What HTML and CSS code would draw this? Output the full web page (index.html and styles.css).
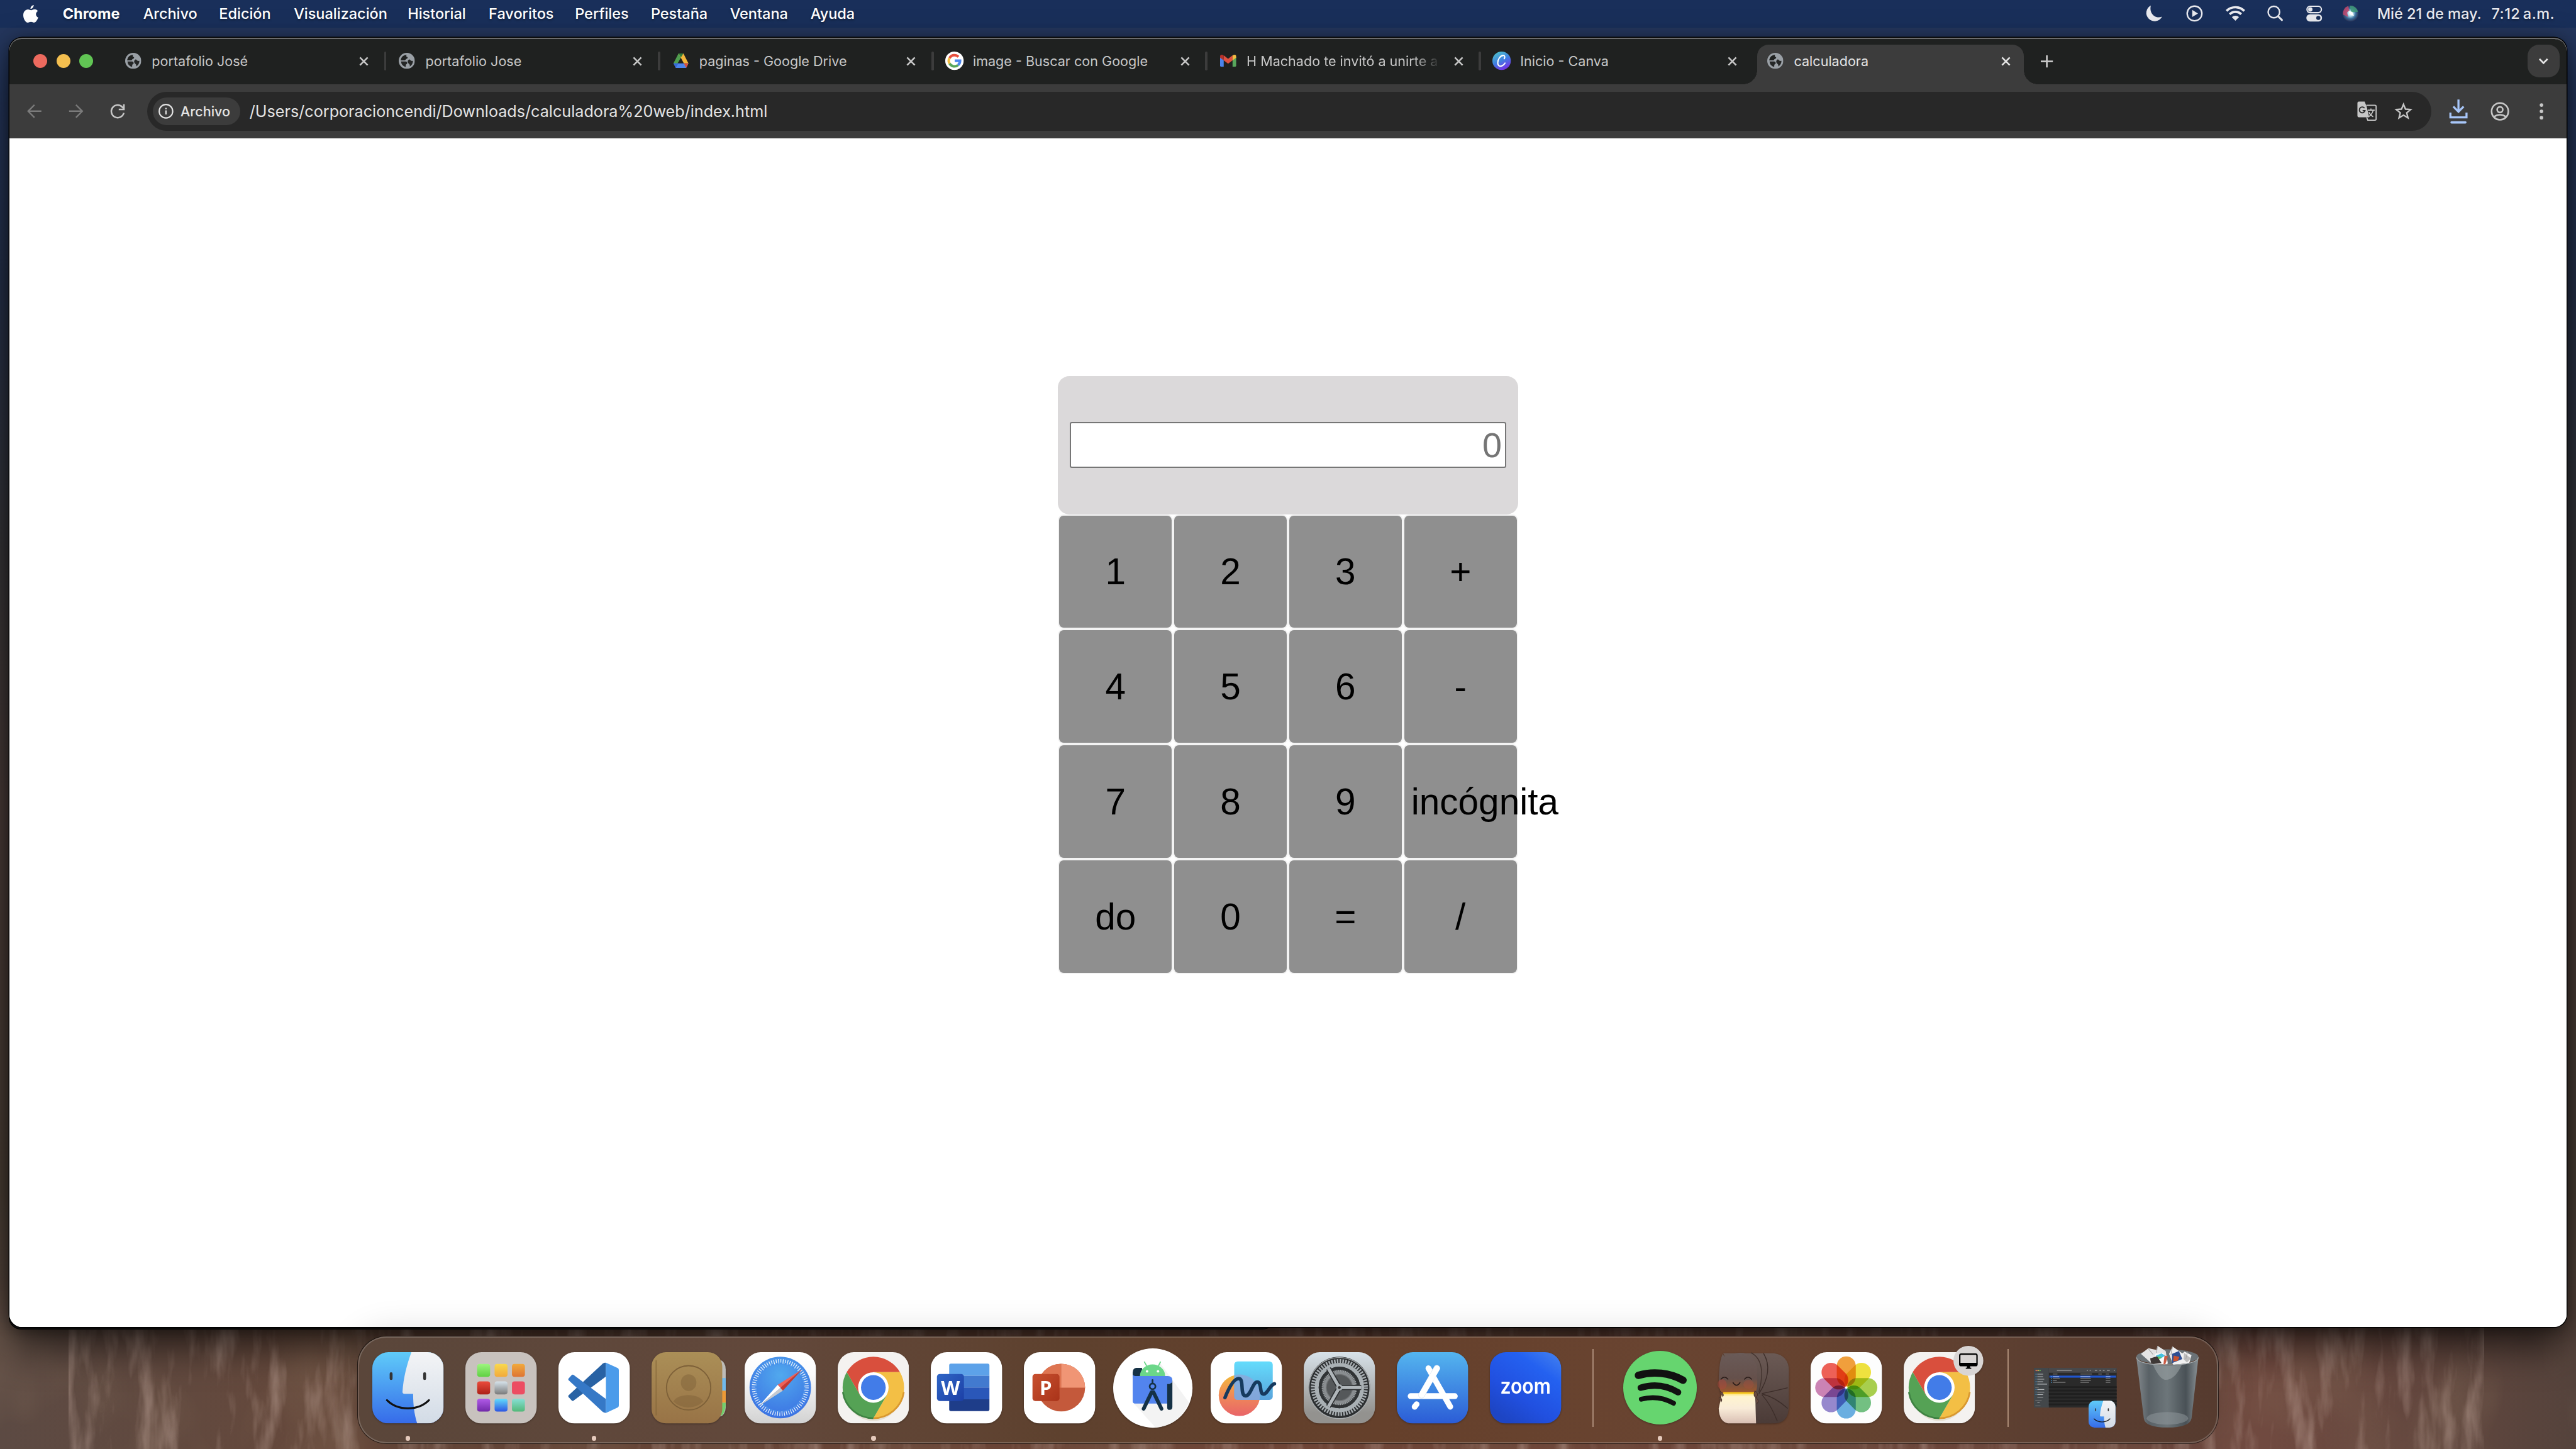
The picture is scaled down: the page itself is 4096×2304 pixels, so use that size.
FILE: index.html
```html
<!DOCTYPE html>
<html lang="es">
<head>
<meta charset="utf-8">
<title>calculadora</title>
<link rel="stylesheet" href="styles.css">
</head>
<body>
<svg class="defs" aria-hidden="true">
  <defs>
    <linearGradient id="gFinder" x1="0" y1="0" x2="0" y2="1"><stop offset="0" stop-color="#5fcbf9"/><stop offset="1" stop-color="#366be9"/></linearGradient>
    <linearGradient id="gFace" x1="0" y1="0" x2="0" y2="1"><stop offset="0" stop-color="#f3f4f6"/><stop offset="1" stop-color="#d2dbe6"/></linearGradient>
    <clipPath id="cIcon"><rect width="124" height="124" rx="28"/></clipPath>
    <radialGradient id="gSiri"><stop offset="0" stop-color="#fff"/><stop offset=".3" stop-color="#b9e4f2"/><stop offset=".65" stop-color="#3c6f9c"/><stop offset="1" stop-color="#2b3558"/></radialGradient>
  </defs>
  <symbol id="globe" viewBox="0 0 28 28">
    <circle cx="14" cy="14" r="14" fill="#9aa0a6"/>
    <path d="M14 3.200c-1.500 1.600-1.200 3.500.5 4 2 .8 1 3-.8 3.200-1.800.3-1.400 2.500-3 2.800H3.300A10.900 10.900 0 0 1 14 3.200z" fill="#1f2120"/>
    <path d="M4 15h8c2 0 3 1.600 2.800 3.400-.2 1.500-2.300 1.200-2.500 2.800l-.2 3.500A11 11 0 0 1 4 15zM18 11.500c3 0 2 3.500 6.800 2.500-.1 4-2 7.800-5.600 9.800.6-3-.4-3.800-2-5.200-1.500-1.400-2-3.500-1.200-5.200z" fill="#1f2120" opacity=".95"/>
  </symbol>
  <symbol id="x" viewBox="0 0 16 16"><path d="M1.500 1.500l13 13m0-13l-13 13" stroke="currentColor" stroke-width="2.800" fill="none"/></symbol>
  <symbol id="finder" viewBox="0 0 124 124">
    <g clip-path="url(#cIcon)">
      <rect width="124" height="124" fill="url(#gFinder)"/>
      <path d="M68 0C60 22 54 45 52.500 69q0 3.500 3.500 3.500h15C71 92 73 108 78 124h46V0z" fill="url(#gFace)"/>
    </g>
    <path d="M32.700 37.500v8.500M91 37.500v8.500" stroke="#333" stroke-width="5" stroke-linecap="round"/>
    <path d="M25.500 83.500c19 19 54 19 73 0" stroke="#111" stroke-width="3.500" fill="none" stroke-linecap="round"/>
  </symbol>
  <symbol id="chrome" viewBox="0 0 124 124">
    <rect width="124" height="124" rx="28" fill="#f4f2f0"/>
    <g transform="translate(62 61.500)">
      <ellipse cx="0" cy="6" rx="50" ry="52" fill="#b9a877" opacity=".25"/>
      <path d="M-46.300-26.750A53.500 53.500 0 0 1 46.300-26.750H0L-23.200 13.400z" fill="#d94f3d"/>
      <path d="M46.300-26.750A53.500 53.500 0 0 1 0 53.500L23.200 13.400 0-26.750z" fill="#f3bf45"/>
      <path d="M0 53.500A53.500 53.500 0 0 1-46.300-26.750L-23.200 13.400 0 20l23.200-6.600z" fill="#55a255"/>
      <path d="M0 53.500A53.500 53.500 0 0 0 53 8" stroke="#d9982f" stroke-width="3" fill="none"/>
      <path d="M0 53.500A53.500 53.500 0 0 1-53 8" stroke="#3f8343" stroke-width="3" fill="none"/>
      <circle r="26.500" fill="#fff"/><circle r="21.500" fill="#427ce8"/>
    </g>
  </symbol>
</svg>

<div class="desktop">
  <svg class="wallpaper" preserveAspectRatio="none" viewBox="0 0 4480 300" aria-hidden="true">
    <defs>
      <filter id="grain" x="0" y="0" width="100%" height="100%">
        <feTurbulence type="fractalNoise" baseFrequency=".03 .006" numOctaves="4" seed="11"/>
        <feColorMatrix values="0 0 0 0 .6  0 0 0 0 .44  0 0 0 0 .38  2.400 0 0 0 -1.150"/>
      </filter>
      <filter id="dark" x="0" y="0" width="100%" height="100%">
        <feTurbulence type="fractalNoise" baseFrequency=".006 .004" numOctaves="3" seed="4"/>
        <feColorMatrix values="0 0 0 0 .25  0 0 0 0 .17  0 0 0 0 .11  2 0 0 0 -.850"/>
      </filter>
      <linearGradient id="warm"><stop offset="0" stop-color="#5c4a43"/><stop offset=".14" stop-color="#67483a"/><stop offset=".5" stop-color="#75493a"/><stop offset=".88" stop-color="#704a40"/><stop offset="1" stop-color="#55433c"/></linearGradient>
    </defs>
    <rect width="4480" height="300" fill="url(#warm)"/>
    <rect width="4480" height="300" filter="url(#dark)" opacity=".4"/>
    <rect x="120" width="4200" height="300" filter="url(#grain)" opacity=".5"/>
  </svg>

  <header class="menubar">
    <nav class="menus">
      <svg class="apple" viewBox="0 0 26 31"><path fill="#fff" d="M18.200 0c.2 2.900-2.400 6.700-5.600 6.700C12.200 3.600 15.300.3 18.200 0zM25.300 10.600c-4.700 2.900-4 9 .7 11-1 3.100-3.800 8.600-6.900 8.900-2.200.1-3.100-1.300-5.600-1.300s-3.700 1.300-5.700 1.400C4.100 30.600 0 23.700 0 17.700 0 11.400 4 7.600 8.200 7.600c2.300 0 4 1.400 5.600 1.400 1.500 0 3.500-1.600 6.200-1.500 2 .1 4 .9 5.300 3.100z"/></svg>
      <b class="m1">Chrome</b><span class="m2">Archivo</span><span class="m3">Edición</span><span class="m4">Visualización</span><span class="m5">Historial</span><span class="m6">Favoritos</span><span class="m7">Perfiles</span><span class="m8">Pestaña</span><span class="m9">Ventana</span><span class="m10">Ayuda</span>
    </nav>
    <div class="status">
      <svg class="s1" viewBox="0 0 36 36"><path d="M12 4a14.500 14.500 0 1 0 19.500 19.500C20 28 8.500 18 12 4z" fill="#e8e9ee"/></svg>
      <svg class="s2" viewBox="0 0 36 36"><circle cx="18" cy="18" r="12.800" fill="none" stroke="#e8e9ee" stroke-width="2.600"/><path d="M14 11.800v12.400l10-6.200z" fill="#e8e9ee"/></svg>
      <svg class="s3" viewBox="0 0 36 36"><g fill="none" stroke="#e8e9ee" stroke-width="4"><path d="M2.500 13.500a22 22 0 0 1 31 0"/><path d="M8 19.300a14 14 0 0 1 20 0"/></g><path d="M18 30.500l-6.200-6.200a9 9 0 0 1 12.400 0z" fill="#e8e9ee"/></svg>
      <svg class="s4" viewBox="0 0 36 36"><circle cx="16" cy="15.500" r="10" fill="none" stroke="#e8e9ee" stroke-width="2.600"/><path d="M23.500 23l6.500 6.500" stroke="#e8e9ee" stroke-width="3.400" stroke-linecap="round"/></svg>
      <svg class="s5" viewBox="0 0 36 36"><rect x="5.800" y="5.500" width="25" height="11" rx="5.500" fill="none" stroke="#e8e9ee" stroke-width="2.400"/><circle cx="11.500" cy="11" r="3.800" fill="#e8e9ee"/><rect x="4.600" y="19.500" width="27.400" height="12.500" rx="6.200" fill="#e8e9ee"/><circle cx="25.500" cy="25.800" r="3.600" fill="#192f5a"/></svg>
      <svg class="s6" viewBox="0 0 36 36"><circle cx="18" cy="18" r="14" fill="url(#gSiri)"/><path d="M5 20A13.500 13.500 0 0 1 14 5l2 8-4 3 2 8z" fill="#c2476c" opacity=".85"/><path d="M17 4.500A13.500 13.500 0 0 1 31 15l-12 1z" fill="#3f9a78" opacity=".85"/><path d="M14 14l7 1 3 7-5-1z" fill="#fff"/></svg>
      <span class="clock"><span>Mié 21 de may.</span><span class="time">7:12&#8239;a.m.</span></span>
    </div>
  </header>

  <main class="window">
    <div class="tabstrip">
      <div class="lights"><i class="red"></i><i class="yellow"></i><i class="green"></i></div>
      <div class="tab"><svg class="fav"><use href="#globe"/></svg><span>portafolio José</span><svg class="close"><use href="#x"/></svg></div>
      <div class="tab"><svg class="fav"><use href="#globe"/></svg><span>portafolio Jose</span><svg class="close"><use href="#x"/></svg></div>
      <div class="tab"><svg class="fav" viewBox="0 0 28 28"><path d="M9.800 1h8.400l-4.200 7.300L5.600 22.700 1 18z" fill="#4f9e4f"/><path d="M9.800 1h8.400L27 18.300h-8z" fill="#f3b63c"/><path d="M9.800 1h8.400L14 8z" fill="#2e7a3b"/><path d="M1 18.300h26l-4 8H5z" fill="#4c84ec"/><path d="M19 18.300h8l-4 8z" fill="#d9503f"/><path d="M1 18.300h8.500l-4.500 8z" fill="#3769d6"/></svg><span>paginas - Google Drive</span><svg class="close"><use href="#x"/></svg></div>
      <div class="tab"><svg class="fav big" viewBox="0 0 32 32"><circle cx="16" cy="16" r="16" fill="#fff"/><g fill="none" stroke-width="4.400"><path d="M22.900 9.100A9.800 9.800 0 0 0 7.500 11.100" stroke="#e8503f"/><path d="M7.500 11.100a9.800 9.800 0 0 0 0 9.800" stroke="#f5bd41"/><path d="M7.500 20.900a9.800 9.800 0 0 0 14.800 2.600" stroke="#58a65c"/><path d="M22.300 23.500a9.800 9.800 0 0 0 3.500-7.500H16.500" stroke="#4a86ee"/></g></svg><span>image - Buscar con Google</span><svg class="close"><use href="#x"/></svg></div>
      <div class="tab"><svg class="fav" viewBox="0 0 28 28"><path d="M0 7v15.500Q0 24 1.500 24H6.300V11z" fill="#4c84ec"/><path d="M28 7v15.500q0 1.500-1.500 1.500h-4.800V11z" fill="#58a65c"/><path d="M6.300 4.500L14 10.500l7.700-6v8.700L14 19 6.300 13.200z" fill="#e0503f"/><path d="M0 6.500Q0 3.500 2.800 3.300q1.500 0 3.500 1.600v8.300L0 8.600z" fill="#b5322b"/><path d="M28 6.500q0-3-2.800-3.200-1.500 0-3.500 1.600v8.300L28 8.600z" fill="#f3bd42"/></svg><span class="fade">H Machado te invitó a unirte a</span><svg class="close"><use href="#x"/></svg></div>
      <div class="tab last"><svg class="fav big" viewBox="0 0 32 32"><defs><linearGradient id="gCanva" x1=".2" y1="0" x2=".7" y2="1"><stop offset="0" stop-color="#4fc4cc"/><stop offset=".5" stop-color="#3f7fe0"/><stop offset="1" stop-color="#7a2be8"/></linearGradient></defs><circle cx="16" cy="16" r="16" fill="url(#gCanva)"/><path d="M20.500 12.500c1.800-2.500 1-6-1.800-5.800C13.500 7 9 14 9.300 20c.3 5.500 4.500 6.500 8 4.600 2-1 3.600-2.600 4.700-4.600" fill="none" stroke="#fff" stroke-width="2.200" stroke-linecap="round"/></svg><span>Inicio - Canva</span><svg class="close"><use href="#x"/></svg></div>
      <div class="tab active"><svg class="fav"><use href="#globe"/></svg><span>calculadora</span><svg class="close"><use href="#x"/></svg></div>
      <svg class="plus" viewBox="0 0 20 20"><path d="M10 0v20M0 10h20" stroke="#c7c7c7" stroke-width="2.800"/></svg>
      <div class="tabsearch"><svg viewBox="0 0 16 12"><path d="M1 2l7 7 7-7" fill="none" stroke="#e3e3e3" stroke-width="3"/></svg></div>
    </div>

    <div class="toolbar">
      <div class="nav">
        <svg viewBox="0 0 28 28"><path d="M26 14H3.500M14 3L3 14l11 11" fill="none" stroke="#7b7b7b" stroke-width="2.600"/></svg>
        <svg viewBox="0 0 28 28"><path d="M2 14h22.500M14 3l11 11-11 11" fill="none" stroke="#7b7b7b" stroke-width="2.600"/></svg>
        <svg viewBox="0 0 28 28"><path d="M25 17A11 11 0 1 1 22.500 7L24.500 9.200" fill="none" stroke="#c7c7c7" stroke-width="2.800"/><path d="M25.200 2v9h-9" fill="none" stroke="#c7c7c7" stroke-width="2.800"/></svg>
      </div>
      <div class="omnibox">
        <div class="chip"><svg viewBox="0 0 26 26"><circle cx="13" cy="13" r="11.700" fill="none" stroke="#e3e3e3" stroke-width="2.400"/><path d="M13 11.500v7M13 7v2.600" stroke="#e3e3e3" stroke-width="2.400"/></svg><span>Archivo</span></div>
        <span class="url">/Users/corporacioncendi/Downloads/calculadora%20web/index.html</span>
        <svg class="translate" viewBox="0 0 34 34"><path d="M2.500.5H13L16.500 9 21 28H3a2.500 2.500 0 0 1-2.500-2.500V3A2.500 2.500 0 0 1 2.500.5z" fill="#c7c7c7"/><path d="M16 7h15a2 2 0 0 1 2 2v22a2 2 0 0 1-2 2H18.500l-2-5" fill="none" stroke="#c7c7c7" stroke-width="2"/><path d="M12.800 12a5 5 0 1 0 .9 4.200H9.500" fill="none" stroke="#282828" stroke-width="2"/><path d="M18.500 15.500h12M24 12.500v3M28 15.500c-1 5-4 8.500-7.500 11M20.500 19c1.500 3.500 4 6 7.500 8" fill="none" stroke="#c7c7c7" stroke-width="1.800"/></svg>
        <svg class="star" viewBox="0 0 30 30"><path d="M15 3.200l3.500 8.300 9 .7-6.900 5.800 2.200 8.800-7.800-4.800-7.800 4.800 2.200-8.800L2.500 12.200l9-.7z" fill="none" stroke="#c7c7c7" stroke-width="2.600"/></svg>
      </div>
      <div class="actions">
        <svg viewBox="0 0 44 44"><g fill="none" stroke="#a8c7fa" stroke-width="3.600"><path d="M22 1.500v20M13 13.500l9 9 9-9M8 24v8.500h28V24"/></g><rect x="8" y="39" width="28" height="4.200" rx="2" fill="#a8c7fa"/></svg>
        <svg viewBox="0 0 44 44"><g fill="none" stroke="#c7c7c7" stroke-width="2.900"><circle cx="22" cy="22" r="14.600"/><circle cx="22" cy="19" r="4.900"/><path d="M11.500 32c5-5.500 16-5.500 21 0"/></g></svg>
        <svg viewBox="0 0 44 44"><g fill="#c7c7c7"><circle cx="22" cy="11" r="3.100"/><circle cx="22" cy="22" r="3.100"/><circle cx="22" cy="33" r="3.100"/></g></svg>
      </div>
    </div>

    <section class="page">
      <div class="calculator">
        <div class="screen"><div class="display">0</div></div>
        <div class="keys">
          <button>1</button><button>2</button><button>3</button><button>+</button>
          <button>4</button><button>5</button><button>6</button><button>-</button>
          <button>7</button><button>8</button><button>9</button><button class="long">incógnita</button>
          <button>do</button><button>0</button><button>=</button><button>/</button>
        </div>
      </div>
    </section>
  </main>

  <footer class="dock">
    <div class="app run"><svg viewBox="0 0 124 124"><use href="#finder"/></svg></div>
    <div class="app"><svg viewBox="0 0 124 124">
      <defs>
        <linearGradient id="l1" x2="0" y2="1"><stop stop-color="#9df57e"/><stop offset="1" stop-color="#5fd043"/></linearGradient>
        <linearGradient id="l2" x2="0" y2="1"><stop stop-color="#f8d84e"/><stop offset="1" stop-color="#f2a93b"/></linearGradient>
        <linearGradient id="l3" x2="0" y2="1"><stop stop-color="#f1a93c"/><stop offset="1" stop-color="#de7434"/></linearGradient>
        <linearGradient id="l4" x2="0" y2="1"><stop stop-color="#ea4b3b"/><stop offset="1" stop-color="#ac2118"/></linearGradient>
        <linearGradient id="l5" x2="0" y2="1"><stop stop-color="#d5e2ea"/><stop offset="1" stop-color="#7a7a7a"/></linearGradient>
        <linearGradient id="l7" x2="0" y2="1"><stop stop-color="#b15be8"/><stop offset="1" stop-color="#7029a8"/></linearGradient>
        <linearGradient id="l8" x2="0" y2="1"><stop stop-color="#62dcfb"/><stop offset="1" stop-color="#2c54e2"/></linearGradient>
        <linearGradient id="l9" x2="0" y2="1"><stop stop-color="#86dfd5"/><stop offset="1" stop-color="#52b878"/></linearGradient>
      </defs>
      <rect width="124" height="124" rx="28" fill="#c8c2be"/>
      <rect x="20.500" y="20.500" width="22.500" height="22.500" rx="4.500" fill="url(#l1)"/><rect x="50.800" y="20.500" width="22.500" height="22.500" rx="4.500" fill="url(#l2)"/><rect x="81" y="20.500" width="22.500" height="22.500" rx="4.500" fill="url(#l3)"/>
      <rect x="20.500" y="51" width="22.500" height="22.500" rx="4.500" fill="url(#l4)"/><rect x="50.800" y="51" width="22.500" height="22.500" rx="4.500" fill="url(#l5)"/><rect x="81" y="51" width="22.500" height="22.500" rx="4.500" fill="#ec4d62"/>
      <rect x="20.500" y="81" width="22.500" height="22.500" rx="4.500" fill="url(#l7)"/><rect x="50.800" y="81" width="22.500" height="22.500" rx="4.500" fill="url(#l8)"/><rect x="81" y="81" width="22.500" height="22.500" rx="4.500" fill="url(#l9)"/>
    </svg></div>
    <div class="app run"><svg viewBox="0 0 124 124">
      <rect width="124" height="124" rx="28" fill="#fff"/>
      <path d="M82.500 18.500v24L26 84.500q-1.500.8-2.800-.2L17.500 78q-1-1.500 0-2.800L77 20q3-2 5.500-1.500z" fill="#2862a4"/>
      <path d="M82.500 105.500v-24L26 39.500q-1.500-.8-2.800.2L17.500 46q-1 1.500 0 2.800L77 104q3 2 5.500 1.500z" fill="#3578c6"/>
      <path d="M82.500 18.300l20.500 9.400q2 1.200 2 3.600v61.400q0 2.400-2 3.600l-20.500 9.400z" fill="#4b9bea"/>
    </svg></div>
    <div class="app"><svg viewBox="0 0 124 124">
      <defs><linearGradient id="gBook" x2="0" y2="1"><stop stop-color="#ab8f57"/><stop offset="1" stop-color="#987346"/></linearGradient></defs>
      <rect x="108" y="14" width="21" height="98" rx="16" fill="#bdbcb8"/><path d="M110 45h19v22h-19z" fill="#6fb9ec"/><path d="M110 67h19v21h-19z" fill="#ee9a35"/><path d="M110 88h19q0 14-6 22h-13z" fill="#73cf6c"/>
      <rect width="123" height="124" rx="25" fill="url(#gBook)"/>
      <path d="M8 14v96" stroke="#7f6235" stroke-width="2" opacity=".6"/>
      <g fill="#7d6038" fill-opacity=".45"><ellipse cx="64.500" cy="53" rx="13.500" ry="14.500"/><path d="M38 86c8-15 44-15 52 0A38 38 0 0 1 38 86z"/></g>
      <circle cx="64.500" cy="62" r="38.500" fill="none" stroke="#7d6038" stroke-width="2"/>
    </svg></div>
    <div class="app"><svg viewBox="0 0 124 124">
      <defs><linearGradient id="gSaf" x2="0" y2="1"><stop stop-color="#fff"/><stop offset=".3" stop-color="#fbfbfb"/><stop offset="1" stop-color="#d2d2d2"/></linearGradient><radialGradient id="gSaf2" cy=".3" r=".75"><stop stop-color="#51a9ee"/><stop offset="1" stop-color="#3a6fe2"/></radialGradient></defs>
      <rect width="124" height="124" rx="28" fill="url(#gSaf)"/>
      <circle cx="62" cy="61.500" r="53.500" fill="url(#gSaf2)"/>
      <circle cx="62" cy="61.500" r="45.500" fill="none" stroke="#e6f1fb" stroke-width="8" stroke-dasharray="1.400 2.570"/>
      <circle cx="62" cy="61.500" r="42" fill="none" stroke="#478fe9" stroke-width="3" stroke-dasharray="3.665 3.665"/>
      <path d="M100 30L57.500 57l5 5z" fill="#ee6258"/><path d="M100 30L66.500 67l-4.500-5z" fill="#c33a32"/>
      <path d="M24.500 94L57.500 57l5 5z" fill="#fff"/><path d="M24.500 94l42-27-4.500-5z" fill="#c6cad0"/>
    </svg></div>
    <div class="app run"><svg viewBox="0 0 124 124"><use href="#chrome"/></svg></div>
    <div class="app"><svg viewBox="0 0 124 124">
      <defs><linearGradient id="gW" x2="1" y2="1"><stop stop-color="#2f66c6"/><stop offset="1" stop-color="#1c3fa6"/></linearGradient></defs>
      <rect width="124" height="124" rx="28" fill="#fff"/>
      <path d="M35 20h64q3 0 3 3v18H32V23q0-3 3-3z" fill="#5da2e9"/><path d="M32 41h70v20.500H32z" fill="#427acf"/><path d="M32 61.500h70V82H32z" fill="#2a57b9"/><path d="M32 82h70v17.500q0 3-3 3H35q-3 0-3-3z" fill="#1e3d89"/>
      <rect x="10.700" y="38" width="47" height="47" rx="5" fill="url(#gW)"/>
      <text x="34.300" y="74" text-anchor="middle" class="office">W</text>
    </svg></div>
    <div class="app"><svg viewBox="0 0 124 124">
      <defs><linearGradient id="gP" x2="1" y2="1"><stop stop-color="#c8502f"/><stop offset="1" stop-color="#a93319"/></linearGradient></defs>
      <rect width="124" height="124" rx="28" fill="#fff"/>
      <circle cx="65" cy="61.700" r="41.500" fill="#c4593b"/><path d="M65 20.200a41.500 41.500 0 0 0-41.500 41.500H65z" fill="#de7552"/><path d="M65 20.200a41.500 41.500 0 0 1 41.500 41.500H65z" fill="#f09575"/>
      <rect x="15" y="38" width="47" height="47" rx="5" fill="url(#gP)"/>
      <text x="38" y="74" text-anchor="middle" class="office">P</text>
    </svg></div>
    <div class="app"><svg class="studio" viewBox="0 0 138 138">
      <circle cx="69" cy="69" r="69" fill="#fff"/>
      <path d="M82 26l50 68q-18 40-58 44L36 96z" fill="#eee" opacity=".7"/>
      <path d="M50 34H40q-6 1-6 8v10h20z" fill="#153145"/>
      <path d="M34 45q1 3 5 3h56q8 0 8 7.500 0 6.500-7 6.500v34H38q-4 0-4-4z" fill="#5284ee"/>
      <path d="M94 62q9 0 9-6v46q0 5-5 5-4 0-4-4z" fill="#153145"/>
      <path d="M46.500 48a22 20 0 0 1 44 0z" fill="#6bd789"/><path d="M58.500 31L54 23M78.500 31l4-8" stroke="#6bd789" stroke-width="2"/><circle cx="59" cy="40" r="2.200" fill="#fff"/><circle cx="78" cy="40" r="2.200" fill="#fff"/>
      <g fill="none" stroke="#153145" stroke-linecap="round"><circle cx="68.500" cy="66" r="5" stroke-width="3"/><path d="M68.500 55v6" stroke-width="3"/><path d="M67 76l-14 29M70 76l14 29" stroke-width="6.500"/></g>
    </svg></div>
    <div class="app"><svg viewBox="0 0 124 124">
      <defs><linearGradient id="gF1" x2="0" y2="1"><stop stop-color="#64dcfc"/><stop offset="1" stop-color="#59a4dc"/></linearGradient><linearGradient id="gF2" x2="0" y2="1"><stop stop-color="#f2b93a"/><stop offset=".5" stop-color="#ef8a58"/><stop offset="1" stop-color="#e96468"/></linearGradient></defs>
      <rect width="124" height="124" rx="28" fill="#fff"/>
      <circle cx="50" cy="75" r="36" fill="url(#gF2)"/><rect x="41" y="16" width="67" height="67" rx="6" fill="url(#gF1)"/>
      <path d="M41 40a36 36 0 0 1 44 43H47q-6 0-6-6z" fill="#8fa6d8" opacity=".75"/>
      <path d="M25 79C31 64 40 46 49 46c10 0 1 30 12 30 9 0 12-24 20-24 9 0 3 21 11 21 7 0 11-16 19-18" fill="none" stroke="#163a5e" stroke-width="6" stroke-linecap="round" stroke-linejoin="round"/>
    </svg></div>
    <div class="app"><svg viewBox="0 0 124 124">
      <defs><linearGradient id="gSet" x2="0" y2="1"><stop stop-color="#d8e2e9"/><stop offset=".85" stop-color="#93928f"/></linearGradient></defs>
      <rect width="124" height="124" rx="28" fill="url(#gSet)"/>
      <circle cx="62" cy="61.500" r="53.500" fill="#2c2f31"/><circle cx="62" cy="62.500" r="53" fill="none" stroke="#a9adaf" stroke-width="1.500"/>
      <circle cx="62" cy="61.500" r="46" fill="none" stroke="#a7adb1" stroke-width="7" stroke-dasharray="2.700 2.118"/>
      <circle cx="62" cy="61.500" r="39.500" fill="none" stroke="#a9b0b4" stroke-width="7"/>
      <circle cx="62" cy="61.500" r="30" fill="#6d7072"/>
      <circle cx="62" cy="61.500" r="33" fill="none" stroke="#303335" stroke-width="6"/>
      <circle cx="62" cy="61.500" r="29" fill="none" stroke="#9a9fa2" stroke-width="3.500" stroke-dasharray="1.600 1.437"/>
      <circle cx="62" cy="61.500" r="25.500" fill="none" stroke="#898d90" stroke-width="4"/>
      <circle cx="62" cy="61.500" r="22" fill="#55585a"/>
      <path d="M62 61.500h38M62 61.500L43 28.500M62 61.500L43 94.500" stroke="#2c2f31" stroke-width="9"/><path d="M62 61.500h38M62 61.500L43 28.500M62 61.500L43 94.500" stroke="#b0b6ba" stroke-width="5.500"/>
      <circle cx="62" cy="61.500" r="5.500" fill="#a9b0b4"/><circle cx="62" cy="61.500" r="2.400" fill="#333"/>
    </svg></div>
    <div class="app"><svg viewBox="0 0 124 124">
      <defs><linearGradient id="gAS" x2="0" y2="1"><stop stop-color="#54b5ef"/><stop offset="1" stop-color="#2b5cd6"/></linearGradient></defs>
      <rect width="124" height="124" rx="28" fill="url(#gAS)"/>
      <g stroke="#fff" stroke-width="10" stroke-linecap="round"><path d="M55 28l38 67"/><path d="M24 76.500h77"/><path d="M69.500 28L43 75" stroke="#dbe6f3" stroke-width="11"/><path d="M70 28L43 74.500"/><path d="M34.500 90.500L31 95"/></g>
    </svg></div>
    <div class="app"><svg viewBox="0 0 124 124">
      <defs><linearGradient id="gZ" x1="1" y1="0" x2=".3" y2="1"><stop stop-color="#4683ee"/><stop offset=".3" stop-color="#2461f0"/><stop offset=".7" stop-color="#2150e0"/><stop offset="1" stop-color="#1d45c4"/></linearGradient></defs>
      <rect width="124" height="124" rx="28" fill="url(#gZ)"/><text x="62" y="72" text-anchor="middle" class="zoomtext" textLength="88" lengthAdjust="spacingAndGlyphs">zoom</text>
    </svg></div>
    <div class="divider first"></div>
    <div class="app run"><svg class="spotify" viewBox="0 0 128 128">
      <circle cx="64" cy="64" r="64" fill="#66d56f"/>
      <g fill="none" stroke="#111" stroke-linecap="round"><path d="M26.500 42.500c26-7.500 54-4.500 77.500 8.500" stroke-width="13"/><path d="M30.500 64c22-6.500 45-4 65 8" stroke-width="11"/><path d="M31.500 84c19-5 38-3 56 7" stroke-width="8.500"/></g>
    </svg></div>
    <div class="app"><svg viewBox="0 0 124 124">
      <defs><linearGradient id="gR" x2="0" y2="1"><stop stop-color="#6b5a55"/><stop offset="1" stop-color="#4b3b37"/></linearGradient><linearGradient id="gLamp" x2="0" y2="1"><stop stop-color="#ffe36a"/><stop offset=".12" stop-color="#fff4cf"/><stop offset=".5" stop-color="#f9ecd8"/><stop offset="1" stop-color="#d9bfb4"/></linearGradient><linearGradient id="gHead" x2="0" y2="1"><stop stop-color="#6a5b58"/><stop offset=".65" stop-color="#65504b"/><stop offset="1" stop-color="#a1582b"/></linearGradient></defs>
      <path d="M10 2h88q26 4 26 30v62q0 30-28 30H56z" fill="url(#gR)"/>
      <path d="M58 1q28 14 14 68" fill="none" stroke="#43342f" stroke-width="1.500"/><path d="M80 2q18 30-8 70M122 62q-20 5-45 10M122 98q-22-20-44-25M104 120q-12-30-27-46" fill="none" stroke="#3c2d29" stroke-width="1.500"/>
      <path d="M3 30Q4 14 9 3l3 5Q22 2 40 1q22 0 29 26v28q0 15-7 16H6Q0 55 3 30z" fill="url(#gHead)"/>
      <ellipse cx="8" cy="56" rx="8" ry="9" fill="#b1483b" opacity=".45"/><ellipse cx="54" cy="56" rx="9" ry="8" fill="#a8503b" opacity=".4"/>
      <path d="M6 47q6-7 12 0M47 47q6-7 12 0M27 53q6 9 12 0" fill="none" stroke="#2b1d1a" stroke-width="1.800" stroke-linecap="round"/>
      <path d="M8 71h57l1 18q0 6 1 35H18Q3 121 2 98z" fill="url(#gLamp)"/><path d="M10 71h54" stroke="#f6c51c" stroke-width="3"/>
      <path d="M65 67q8 6 2 12-6-2-2-12zM67 79q7 6 1 11M4 68q9 4 5 10M3 78q7 3 3 9" fill="#6a4c40" stroke="#3d2a24" stroke-width="1"/>
    </svg></div>
    <div class="app"><svg viewBox="0 0 124 124">
      <rect width="124" height="124" rx="28" fill="#fdfdfd"/>
      <g transform="translate(62 61.500)" class="petals">
        <rect x="-16.500" y="-54" width="33" height="52" rx="16.500" fill="#f2a03c"/>
        <rect x="-16.500" y="-54" width="33" height="52" rx="16.500" fill="#f0e33f" transform="rotate(45)"/>
        <rect x="-16.500" y="-54" width="33" height="52" rx="16.500" fill="#a9d04e" transform="rotate(90)"/>
        <rect x="-16.500" y="-54" width="33" height="52" rx="16.500" fill="#74c283" transform="rotate(135)"/>
        <rect x="-16.500" y="-54" width="33" height="52" rx="16.500" fill="#6bb0e2" transform="rotate(180)"/>
        <rect x="-16.500" y="-54" width="33" height="52" rx="16.500" fill="#9789cf" transform="rotate(225)"/>
        <rect x="-16.500" y="-54" width="33" height="52" rx="16.500" fill="#cd84b6" transform="rotate(270)"/>
        <rect x="-16.500" y="-54" width="33" height="52" rx="16.500" fill="#ef6258" transform="rotate(315)"/>
      </g>
    </svg></div>
    <div class="app"><svg viewBox="0 0 124 124"><use href="#chrome"/>
      <circle cx="112.500" cy="15" r="26" fill="#d9d5d4"/><rect x="97.500" y="3.500" width="30" height="20" rx="2.500" fill="#d9d5d4" stroke="#000" stroke-width="2.400"/><path d="M97 18.500h31v3q0 2.500-2.500 2.500h-26Q97 24 97 21.500zM110 24h5.500v3h2v2h-9.500v-2h2z" fill="#000"/>
    </svg></div>
    <div class="divider second"></div>
    <div class="minimized"><svg viewBox="0 0 144 104">
      <rect width="144" height="69" rx="2" fill="#2a2a2a"/><rect width="26" height="69" fill="#43474a"/><rect x="26" width="118" height="8.500" fill="#48484a"/>
      <circle cx="4" cy="4.500" r="1.300" fill="#ed6a5e"/><circle cx="7.300" cy="4.500" r="1.300" fill="#f4bf4f"/><circle cx="10.600" cy="4.500" r="1.300" fill="#61c554"/>
      <path d="M40 4.500h26M92 4.500h2M97 4.500h2M106 4.500h4M114 4.500h3M120 4.500h3M127 4.500h5M139 4.500h2" stroke="#9a9a9a" stroke-width="1.600"/>
      <path d="M33 10.800h8M81 10.800h20M112 10.800h6M125 10.800h6" stroke="#8b8b8b" stroke-width="1"/>
      <path d="M26 33.500h118M26 39.500h118M26 45.500h118M26 51.500h118M26 57.500h118M26 63.500h118" stroke="#1f1f1f" stroke-width="3"/>
      <rect x="27" y="13.500" width="116" height="3.500" fill="#2055cf"/>
      <path d="M33 15.300h11M81 15.300h17M125 15.300h8" stroke="#dce6fa" stroke-width="1"/>
      <path d="M33 18.700h12M33 22h7M33 25.200h22M81 18.700h18M81 22h18M81 25.200h15M125 18.700h8M125 22h8M125 25.200h8" stroke="#a0a0a0" stroke-width="1"/>
      <path d="M6 11h10M6 15.300h10M6 19.600h12M6 24h10M6 28.300h17M6 37.600h12M6 42h12M6 46.400h10M6 50.800h10M6 60h4" stroke="#b4b7b9" stroke-width="1.100"/><path d="M2.500 34.500h6M2.500 56.500h11M2.500 66h9" stroke="#777" stroke-width="1"/>
      <path d="M3 11h1.500M3 15.300h1.500M3 19.600h1.500M3 24h1.500M3 28.300h1.500M3 37.600h1.500M3 42h1.500M3 46.400h1.500M30 15.300h1.500M30 18.700h1.500M30 22h1.500M30 25.200h1.500" stroke="#4aa6e8" stroke-width="1.500"/>
      <use href="#finder" x="95" y="57" width="47" height="47"/>
    </svg></div>
    <div class="trash"><svg viewBox="0 0 110 142">
      <defs><linearGradient id="gT"><stop stop-color="#83898d"/><stop offset=".2" stop-color="#596166"/><stop offset=".5" stop-color="#6d767a"/><stop offset=".8" stop-color="#495156"/><stop offset="1" stop-color="#8a9296"/></linearGradient></defs>
      <ellipse cx="55" cy="19" rx="54" ry="13" fill="#6b7276"/>
      <path d="M9 14L22 4l14 3 2-7 14 9 4 22H28z" fill="#e4e4e4"/><path d="M58 14l6-13 17 12 4-3 12 6-4 14-28 3z" fill="#f1f1f1"/><path d="M34 14l14-2 7 20H32z" fill="#fafafa"/><path d="M35 17l10-4 6 4-9 6z" fill="#44c0e2"/><path d="M38 18l7 2-6 4z" fill="#65c457"/><path d="M63 14l12-5 6 14-18 7z" fill="#2f4f92"/><path d="M66 17l10 2-3 7-8 1z" fill="#c9522f"/><path d="M25 22l12-4 8 12-18 2z" fill="#3e3836"/><path d="M50 17l6 1-5 15h-3z" fill="#cb5b45"/><path d="M84 12l12 10-7 7-6-6z" fill="#bdbdbd"/><path d="M22 5l8 10M38 0l-2 12M64 1l-3 15M90 10l-3 13" stroke="#a3a3a3" stroke-width="1.200"/>
      <path d="M1 20q3 13 54 13t54-13L97 126q-3 16-42 16t-41-16z" fill="url(#gT)"/>
      <path d="M30 33q25 4 50 0-12 26-28 26-10 0-22-26z" fill="#a3abae" opacity=".5"/><ellipse cx="55" cy="126" rx="36" ry="11" fill="#91999d" opacity=".5"/>
      <path d="M1 20q3 13 54 13t54-13" fill="none" stroke="#a4abae" stroke-width="1.500"/>
    </svg></div>
  </footer>
</div>
</body>
</html>
```
FILE: styles.css
```css
/* 1rem = 10 points of a 2240 x 1260 desktop */
html { font-size: 18.285714px; }
* { box-sizing: border-box; }
body { margin: 0; font-family: Inter, "Liberation Sans", sans-serif; }
svg { display: block; overflow: visible; flex: none; }
.defs { position: absolute; width: 0; height: 0; }

.desktop {
  position: relative;
  isolation: isolate;
  width: 224rem;
  height: 126rem;
  overflow: hidden;
  display: flex;
  flex-direction: column;
  align-items: center;
  background: linear-gradient(#24365c 0, #24365c 6%, #26314a 20%, #373638 38%, #4a3c39 55%, #4a3f35 82%, #5c4941 93%, #5e4b44 100%);
}
.wallpaper {
  position: absolute;
  left: 0;
  bottom: 0;
  width: 100%;
  height: 15rem;
  z-index: -2;
  overflow: hidden;
  -webkit-mask-image: linear-gradient(transparent, #000 35%);
  mask-image: linear-gradient(transparent, #000 35%);
}

/* menu bar */
.menubar {
  width: 100%;
  height: 2.4rem;
  flex: none;
  display: flex;
  justify-content: space-between;
  align-items: center;
  padding: 0 1.85rem 0 2.05rem;
  background: #192f5a;
  color: #fff;
  font-size: 1.285rem;
  font-weight: 500;
  text-shadow: 0 .1rem .2rem rgba(0, 0, 0, .35);
}
.menus { display: flex; align-items: center; white-space: nowrap; }
.menus > * { flex: none; }
.apple { width: 1.3rem; height: 1.55rem; margin-right: 2.1rem; }
.m1 { width: 7rem; font-weight: 700; }
.m2 { width: 6.6rem; }
.m3 { width: 6.5rem; }
.m4 { width: 9.9rem; }
.m5 { width: 7.05rem; }
.m6 { width: 7.5rem; }
.m7 { width: 6.6rem; }
.m8 { width: 6.88rem; }
.m9 { width: 7rem; }
.status { display: flex; align-items: center; color: #e8e9ee; }
.status svg { width: 1.8rem; height: 1.8rem; }
.s1 { margin-right: 1.68rem; }
.s2 { margin-right: 1.8rem; }
.s3 { margin-right: 1.65rem; }
.s4 { margin-right: 1.55rem; }
.s5 { margin-right: 1.4rem; }
.s6 { margin-right: 1.4rem; }
.clock { display: flex; justify-content: space-between; width: 15.45rem; white-space: nowrap; }
.time { letter-spacing: .02em; }

/* browser window */
.window {
  position: relative;
  width: 222.4rem;
  height: 112.1rem;
  margin-top: .9rem;
  flex: none;
  display: flex;
  flex-direction: column;
  border-radius: 1.1rem;
  background: #fff;
  border-top: .11rem solid #6c6c6c;
  box-shadow: 0 0 0 .08rem #000, 0 1.6rem 3.4rem rgba(0, 0, 0, .66), 0 .2rem 1.2rem rgba(0, 0, 0, .35);
}
.window::after {
  content: "";
  position: absolute;
  z-index: -1;
  left: 0;
  bottom: -.17rem;
  width: 110rem;
  height: 2rem;
  border-radius: 1.1rem;
  background: #1c1c1c;
  box-shadow: 0 0 0 .05rem #000;
}
.tabstrip {
  height: 3.9rem;
  flex: none;
  display: flex;
  padding: .5rem .6rem 0 2.1rem;
  border-radius: 1.05rem 1.05rem 0 0;
  background: #1f2120;
}
.lights { display: flex; gap: .8rem; width: 7.4rem; padding-top: .8rem; flex: none; }
.lights i { width: 1.2rem; height: 1.2rem; border-radius: 50%; }
.red { background: #ed6a5e; }
.yellow { background: #f4bf4f; }
.green { background: #61c554; }
.tab {
  position: relative;
  width: 23.8rem;
  height: 3.4rem;
  flex: none;
  display: flex;
  align-items: center;
  padding: 0 2.05rem .6rem .6rem;
  color: #c7c7c7;
  font-size: 1.18rem;
}
.tab::after {
  content: "";
  position: absolute;
  right: .5rem;
  top: .6rem;
  width: .2rem;
  height: 1.6rem;
  border-radius: .1rem;
  background: #3c3c3c;
}
.tab.last::after, .tab.active::after { display: none; }
.tab span { flex: 1; white-space: nowrap; overflow: hidden; }
.tab .fade { margin-right: 1.15rem; -webkit-mask-image: linear-gradient(90deg, #000 86%, transparent); mask-image: linear-gradient(90deg, #000 86%, transparent); }
.fav { width: 1.4rem; height: 1.4rem; margin-right: .9rem; }
.fav.big { width: 1.6rem; height: 1.6rem; margin: 0 .8rem 0 -.1rem; }
.close { width: .82rem; height: .82rem; }
.tab.active {
  width: 23.2rem;
  margin-left: -.3rem;
  margin-right: .3rem;
  padding: 0 1.15rem .6rem .9rem;
  border-radius: 1rem 1rem 0 0;
  background: #3c3c3c;
  color: #e3e3e3;
}
.tab.active::before, .tab.active::after {
  content: "";
  display: block;
  position: absolute;
  top: auto;
  bottom: 0;
  width: 1.2rem;
  height: 1.2rem;
  border-radius: 0;
}
.tab.active::before { left: -1.2rem; background: radial-gradient(circle at 0 0, transparent 1.18rem, #3c3c3c 1.2rem); }
.tab.active::after { right: -1.2rem; background: radial-gradient(circle at 100% 0, transparent 1.18rem, #3c3c3c 1.2rem); }
.plus { width: 1.05rem; height: 1.05rem; margin: .88rem 0 0 1.15rem; }
.tabsearch {
  width: 2.8rem;
  height: 2.8rem;
  margin-left: auto;
  display: grid;
  place-items: center;
  border-radius: 1rem;
  background: #3c3c3c;
}
.tabsearch svg { width: .8rem; height: .6rem; }

.toolbar {
  height: 4.7rem;
  flex: none;
  display: flex;
  align-items: center;
  padding: 0 1.1rem 0 1.5rem;
  background: #3c3c3c;
}
.nav { display: flex; gap: 2.2rem; width: 10.5rem; }
.nav svg { width: 1.4rem; height: 1.4rem; }
.omnibox {
  flex: 1;
  height: 3.4rem;
  display: flex;
  align-items: center;
  padding: 0 1.65rem 0 .5rem;
  border-radius: 1.7rem;
  background: #282828;
  color: #e3e3e3;
}
.chip {
  width: 7.6rem;
  height: 2.4rem;
  flex: none;
  display: flex;
  align-items: center;
  gap: .6rem;
  padding-left: .5rem;
  border-radius: 1.2rem;
  background: #3c3c3c;
  font-size: 1.18rem;
  font-weight: 500;
}
.chip svg { width: 1.3rem; height: 1.3rem; }
.url { margin-left: .8rem; flex: 1; font-size: 1.376rem; }
.translate { width: 1.7rem; height: 1.7rem; margin-right: 1.6rem; }
.star { width: 1.5rem; height: 1.5rem; }
.actions { display: flex; gap: 1.4rem; padding-left: 1.3rem; }
.actions svg { width: 2.2rem; height: 2.2rem; }

/* calculator page */
.page { flex: 1; display: flex; justify-content: center; padding-top: 20.7rem; border-radius: 0 0 1.1rem 1.1rem; background: #fff; font-family: "Liberation Sans", Arial, sans-serif; }
.calculator { width: 40rem; }
.screen { height: 12rem; padding: 4rem 1rem; border-radius: 1rem; background: #dbd9da; }
.display {
  height: 4rem;
  border: .11rem solid #767676;
  border-radius: .18rem;
  padding-right: .3rem;
  background: #fff;
  color: #757575;
  font-size: 3.05rem;
  line-height: 3.85rem;
  text-align: right;
}
.keys { display: grid; grid-template-columns: repeat(4, 10rem); grid-auto-rows: 10rem; }
.keys button {
  display: flex;
  justify-content: center;
  align-items: center;
  border: .11rem solid #f3f3f3;
  border-radius: .5rem;
  padding: 0 .6rem;
  background: #8f8f8f;
  color: #000;
  font: 3.2rem "Liberation Sans", Arial, sans-serif;
  white-space: nowrap;
}
.keys .long { justify-content: flex-start; }

/* dock */
.dock {
  position: relative;
  height: 9.3rem;
  margin-top: .83rem;
  flex: none;
  display: flex;
  align-items: center;
  width: 161.8rem;
  padding: 0 .2rem .4rem;
  border: .11rem solid rgba(255, 255, 255, .18);
  border-radius: 2.5rem;
  background: linear-gradient(90deg, #5a463a, #62483b 22%, #5e412e 38%, #65402b 55%, #694431 70%, #65422f 80%, #5c3f31 90%, #563b2f);
  box-shadow: 0 0 0 .06rem rgba(0, 0, 0, .6), 0 -.2rem 3.2rem rgba(0, 0, 0, .16);
}
.app { position: relative; width: 8.1rem; flex: none; display: flex; justify-content: center; }
.app > svg { width: 6.2rem; height: 6.2rem; filter: drop-shadow(0 .08rem .1rem rgba(0, 0, 0, .3)); }
.app > .studio { width: 6.9rem; height: 6.9rem; }
.app > .spotify { width: 6.4rem; height: 6.4rem; }
.run::after {
  content: "";
  position: absolute;
  left: 50%;
  top: calc(50% + 4.2rem);
  width: .4rem;
  height: .4rem;
  margin-left: -.2rem;
  border-radius: 50%;
  background: #e5cabc;
}
.divider { width: .1rem; height: 6.8rem; flex: none; background: #a98975; }
.first { margin: 0 1.75rem; }
.second { margin: 0 1.85rem; }
.minimized { width: 8rem; flex: none; padding-left: .35rem; }
.minimized > svg { width: 7.2rem; height: 5.2rem; margin-top: 1.7rem; }
.trash { width: 7.9rem; flex: none; padding-left: 1.2rem; }
.trash > svg { width: 5.5rem; height: 7.1rem; margin-top: -.2rem; }
.office { font: 700 34px "Open Sans", sans-serif; fill: #fff; }
.zoomtext { font: 600 37px Inter, sans-serif; fill: #fff; }
.petals rect { mix-blend-mode: multiply; }
```
